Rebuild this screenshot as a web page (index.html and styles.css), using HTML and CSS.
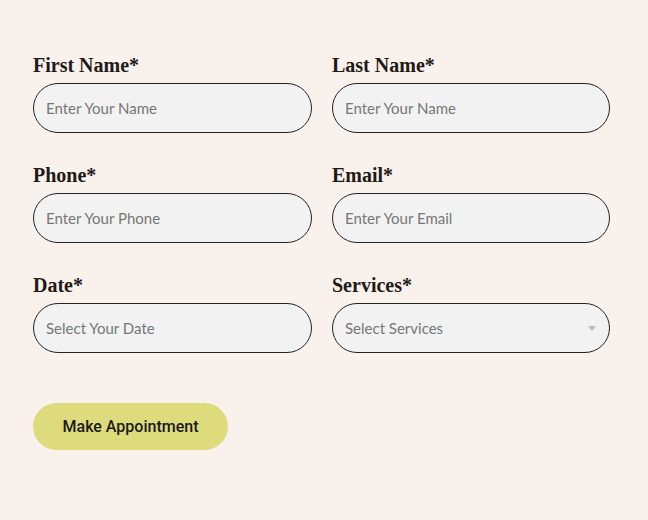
FILE: index.html
```html
<!DOCTYPE html>
<html lang="en">
<head>
    <meta charset="UTF-8">
    <meta name="viewport" content="width=device-width, initial-scale=1.0">
    <title>Appointment</title>
    <link rel="stylesheet" href="styles.css">
</head>
<body>
    <form class="appointment-form">
        <div class="fields">
            <div class="field">
                <label for="first">First Name*</label>
                <input type="text" id="first" placeholder="Enter Your Name">
            </div>
            <div class="field">
                <label for="last">Last Name*</label>
                <input type="text" id="last" placeholder="Enter Your Name">
            </div>
            <div class="field">
                <label for="phone">Phone*</label>
                <input type="text" id="phone" placeholder="Enter Your Phone">
            </div>
            <div class="field">
                <label for="email">Email*</label>
                <input type="text" id="email" placeholder="Enter Your Email">
            </div>
            <div class="field">
                <label for="date">Date*</label>
                <input type="text" id="date" placeholder="Select Your Date">
            </div>
            <div class="field">
                <label for="services">Services*</label>
                <div class="select">
                    <select id="services">
                        <option>Select Services</option>
                    </select>
                    <span class="caret"></span>
                </div>
            </div>
        </div>
        <button type="button" class="submit">Make Appointment</button>
    </form>
</body>
</html>
```

FILE: styles.css
```css
body {
    margin: 0;
    background: #f9f1ec;
    font-family: 'Lato', sans-serif;
}
.appointment-form {
    padding: 54px 0 0 33px;
}
.fields {
    display: grid;
    grid-template-columns: 279px 278px;
    column-gap: 20px;
    row-gap: 31px;
}
.field label {
    display: block;
    font-family: 'Liberation Serif', serif;
    font-weight: bold;
    font-size: 20px;
    line-height: 22px;
    color: #1f1a17;
    margin-bottom: 7px;
}
input, select {
    display: block;
    width: 100%;
    height: 50px;
    box-sizing: border-box;
    border: 1px solid #222;
    border-radius: 25px;
    background: #f2f2f2;
    padding: 0 12px;
    font-family: 'Lato', sans-serif;
    font-size: 15px;
    color: #777;
    outline: none;
}
input::placeholder {
    color: #777;
}
.select {
    position: relative;
}
select {
    appearance: none;
}
.caret {
    position: absolute;
    right: 14px;
    top: 23px;
    border-left: 4px solid transparent;
    border-right: 4px solid transparent;
    border-top: 5px solid #bbb;
}
.submit {
    margin-top: 50px;
    height: 47px;
    width: 195px;
    border: none;
    border-radius: 24px;
    background: #dedb7d;
    font-family: 'Roboto', sans-serif;
    font-weight: 500;
    font-size: 16px;
    color: #1a1a1a;
    cursor: pointer;
}
```
